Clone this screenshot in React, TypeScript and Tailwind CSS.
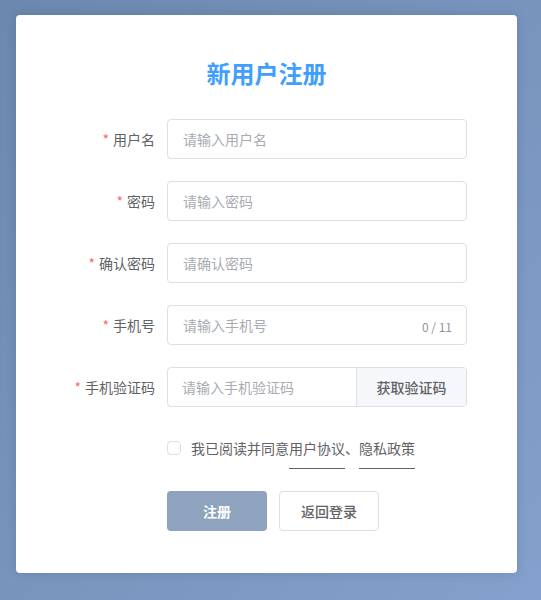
import React from 'react';

const Field = ({ label, children }: { label: string; children: React.ReactNode }) => (
  <div className="flex items-center h-10">
    <label className="w-[120px] pr-3 text-right text-sm text-[#606266]">
      <span className="text-[#f56c6c] mr-1">*</span>
      {label}
    </label>
    {children}
  </div>
);

const inputCls =
  'h-10 w-[300px] rounded border border-[#dcdfe6] bg-white px-[15px] text-sm text-[#606266] outline-none placeholder:text-[#a8abb2]';

export default function App() {
  return (
    <div
      className="min-h-[600px] w-full bg-gradient-to-br from-[#6c88ae] to-[#84a1cd] px-4 pt-[15px] pb-[27px]"
      style={{ fontFamily: '"Noto Sans CJK SC", "Noto Sans", sans-serif' }}
    >
      <div className="w-[501px] h-[558px] rounded bg-white pt-[42px] shadow-[0_0_12px_rgba(0,0,0,0.12)]">
        <h1 className="text-center text-2xl font-bold leading-8 text-[#409eff]">新用户注册</h1>

        <div className="mt-[30px] ml-[31px] flex flex-col gap-[22px]">
          <Field label="用户名">
            <input className={inputCls} placeholder="请输入用户名" />
          </Field>
          <Field label="密码">
            <input type="password" className={inputCls} placeholder="请输入密码" />
          </Field>
          <Field label="确认密码">
            <input type="password" className={inputCls} placeholder="请确认密码" />
          </Field>
          <Field label="手机号">
            <div className="relative">
              <input className={inputCls} placeholder="请输入手机号" />
              <span className="absolute right-[15px] top-[12px] text-xs leading-5 text-[#909399]">0 / 11</span>
            </div>
          </Field>
          <Field label="手机验证码">
            <div className="flex h-10 w-[300px] rounded border border-[#dcdfe6] overflow-hidden">
              <input
                className="h-full flex-1 min-w-0 px-[14px] text-sm text-[#606266] outline-none placeholder:text-[#a8abb2]"
                placeholder="请输入手机验证码"
              />
              <button className="w-[110px] h-full border-l border-[#dcdfe6] bg-[#f5f7fa] text-sm font-medium text-[#606266]">
                获取验证码
              </button>
            </div>
          </Field>
        </div>

        <div className="mt-[31px] ml-[151px] flex items-center text-sm text-[#606266]">
          <span className="w-[14px] h-[14px] rounded-sm border border-[#dcdfe6] bg-white" />
          <span className="ml-[10px]">
            我已阅读并同意
            <span className="border-b border-[#606266] pb-[10px]">用户协议</span>、
            <span className="border-b border-[#606266] pb-[10px]">隐私政策</span>
          </span>
        </div>

        <div className="mt-[33px] ml-[151px] flex gap-3">
          <button className="w-[100px] h-10 rounded bg-[#8ea3bd] text-sm font-bold text-white">注册</button>
          <button className="w-[100px] h-10 rounded border border-[#dcdfe6] bg-white text-sm font-medium text-[#606266]">
            返回登录
          </button>
        </div>
      </div>
    </div>
  );
}
